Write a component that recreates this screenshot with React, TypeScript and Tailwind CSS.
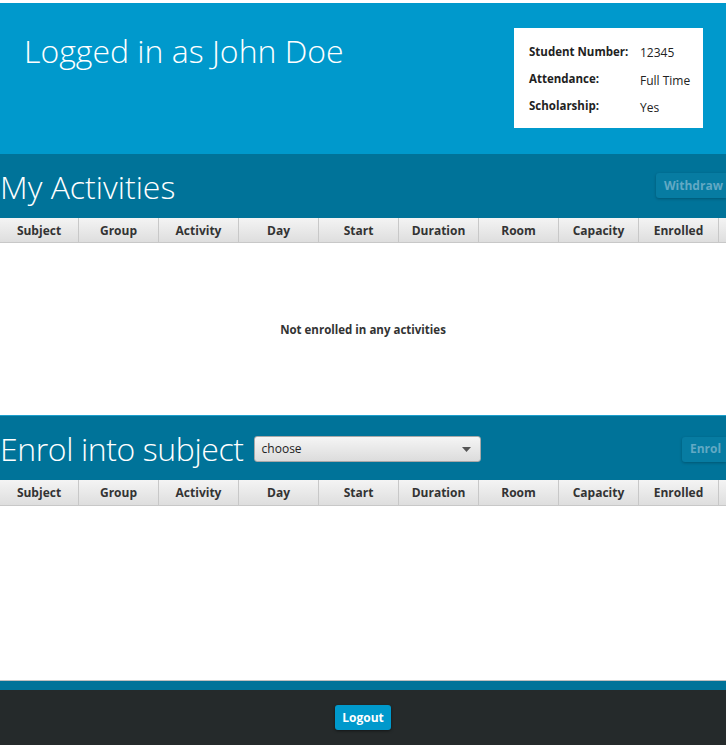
import React from "react";

const cols = ["Subject", "Group", "Activity", "Day", "Start", "Duration", "Room", "Capacity", "Enrolled", ""];

function TableHeader({ h }: { h: string }) {
  return (
    <div className={`flex ${h} overflow-hidden border-b border-[#c8c8c8] bg-gradient-to-b from-[#f4f4f4] to-[#dedede] shrink-0`}>
      {cols.map((c, i) => (
        <div
          key={i}
          className={`${i === 0 ? "w-[79px]" : "w-[80px]"} shrink-0 border-r border-[#c8c8c8] flex items-center justify-center pt-[1px] text-[12px] font-bold text-[#333]`}
        >
          {c}
        </div>
      ))}
    </div>
  );
}

export default function App() {
  const font = { fontFamily: '"Open Sans", "Noto Sans", sans-serif' };
  return (
    <div className="w-full h-[745px] flex flex-col bg-white pt-[3px] overflow-hidden" style={font}>
      <div className="h-[151px] bg-[#0099cc] flex justify-between shrink-0">
        <div className="pl-[24px] pt-[28px] text-white text-[32px] font-light leading-[40px]">
          Logged in as John Doe
        </div>
        <div className="mt-[25px] mr-[23px] w-[189px] h-[100px] bg-white pl-[15px] pt-[15px] text-[12px] text-[#222]">
          <div className="flex h-[27px] items-start">
            <span className="w-[111px] font-bold text-[11.5px]">Student Number:</span>
            <span className="mt-[1px]">12345</span>
          </div>
          <div className="flex h-[27px] items-start">
            <span className="w-[111px] font-bold text-[11.5px]">Attendance:</span>
            <span className="mt-[2px]">Full Time</span>
          </div>
          <div className="flex h-[26px] items-start">
            <span className="w-[111px] font-bold text-[11.5px]">Scholarship:</span>
            <span className="mt-[2px]">Yes</span>
          </div>
        </div>
      </div>
      <div className="h-[64px] bg-[#007399] flex items-center justify-between shrink-0">
        <div className="text-white text-[32px] font-light leading-none mt-[1px]">My Activities</div>
        <div className="h-[25px] w-[70px] -mt-[1px] rounded-l-[3px] bg-[#077ca2] shadow-[0_1px_3px_rgba(0,0,0,0.25)] flex items-center pl-[8px] text-[12px] font-bold text-[#62a9c4]">
          Withdraw
        </div>
      </div>
      <TableHeader h="h-[25px]" />
      <div className="h-[172px] flex items-center justify-center text-[11.5px] font-bold text-[#333] shrink-0">
        <span className="mt-[2px]">Not enrolled in any activities</span>
      </div>
      <div className="h-[65px] bg-[#007399] border-t border-[#1d9fcc] flex items-center justify-between shrink-0">
        <div className="flex items-center">
          <div className="text-white text-[32px] font-light leading-none mt-[2px] tracking-[-0.4px]">Enrol into subject</div>
          <div className="ml-[10px] mt-[2px] w-[227px] h-[26px] rounded-[3px] border border-[#a8a8a8] bg-gradient-to-b from-[#f5f5f5] to-[#dcdcdc] flex items-center justify-between pl-[7px] pr-[9px] text-[12px] text-[#222]">
            <span>choose</span>
            <svg width="9" height="5" viewBox="0 0 9 5">
              <path d="M0 0 L9 0 L4.5 5 Z" fill="#555" />
            </svg>
          </div>
        </div>
        <div className="h-[25px] w-[44px] mt-[2px] rounded-l-[3px] bg-[#077ca2] shadow-[0_1px_3px_rgba(0,0,0,0.25)] flex items-center pl-[8px] text-[12px] font-bold text-[#62a9c4]">
          Enrol
        </div>
      </div>
      <TableHeader h="h-[26px]" />
      <div className="flex-1" />
      <div className="h-[10px] bg-[#007399] border-t border-[#c0c0c0] shrink-0" />
      <div className="h-[55px] bg-[#252a2b] flex items-center justify-center shrink-0">
        <div className="h-[25px] w-[56px] rounded-[3px] bg-[#0099cc] shadow-[0_1px_3px_rgba(0,0,0,0.5)] flex items-center justify-center text-[12px] font-bold text-white">
          Logout
        </div>
      </div>
    </div>
  );
}
